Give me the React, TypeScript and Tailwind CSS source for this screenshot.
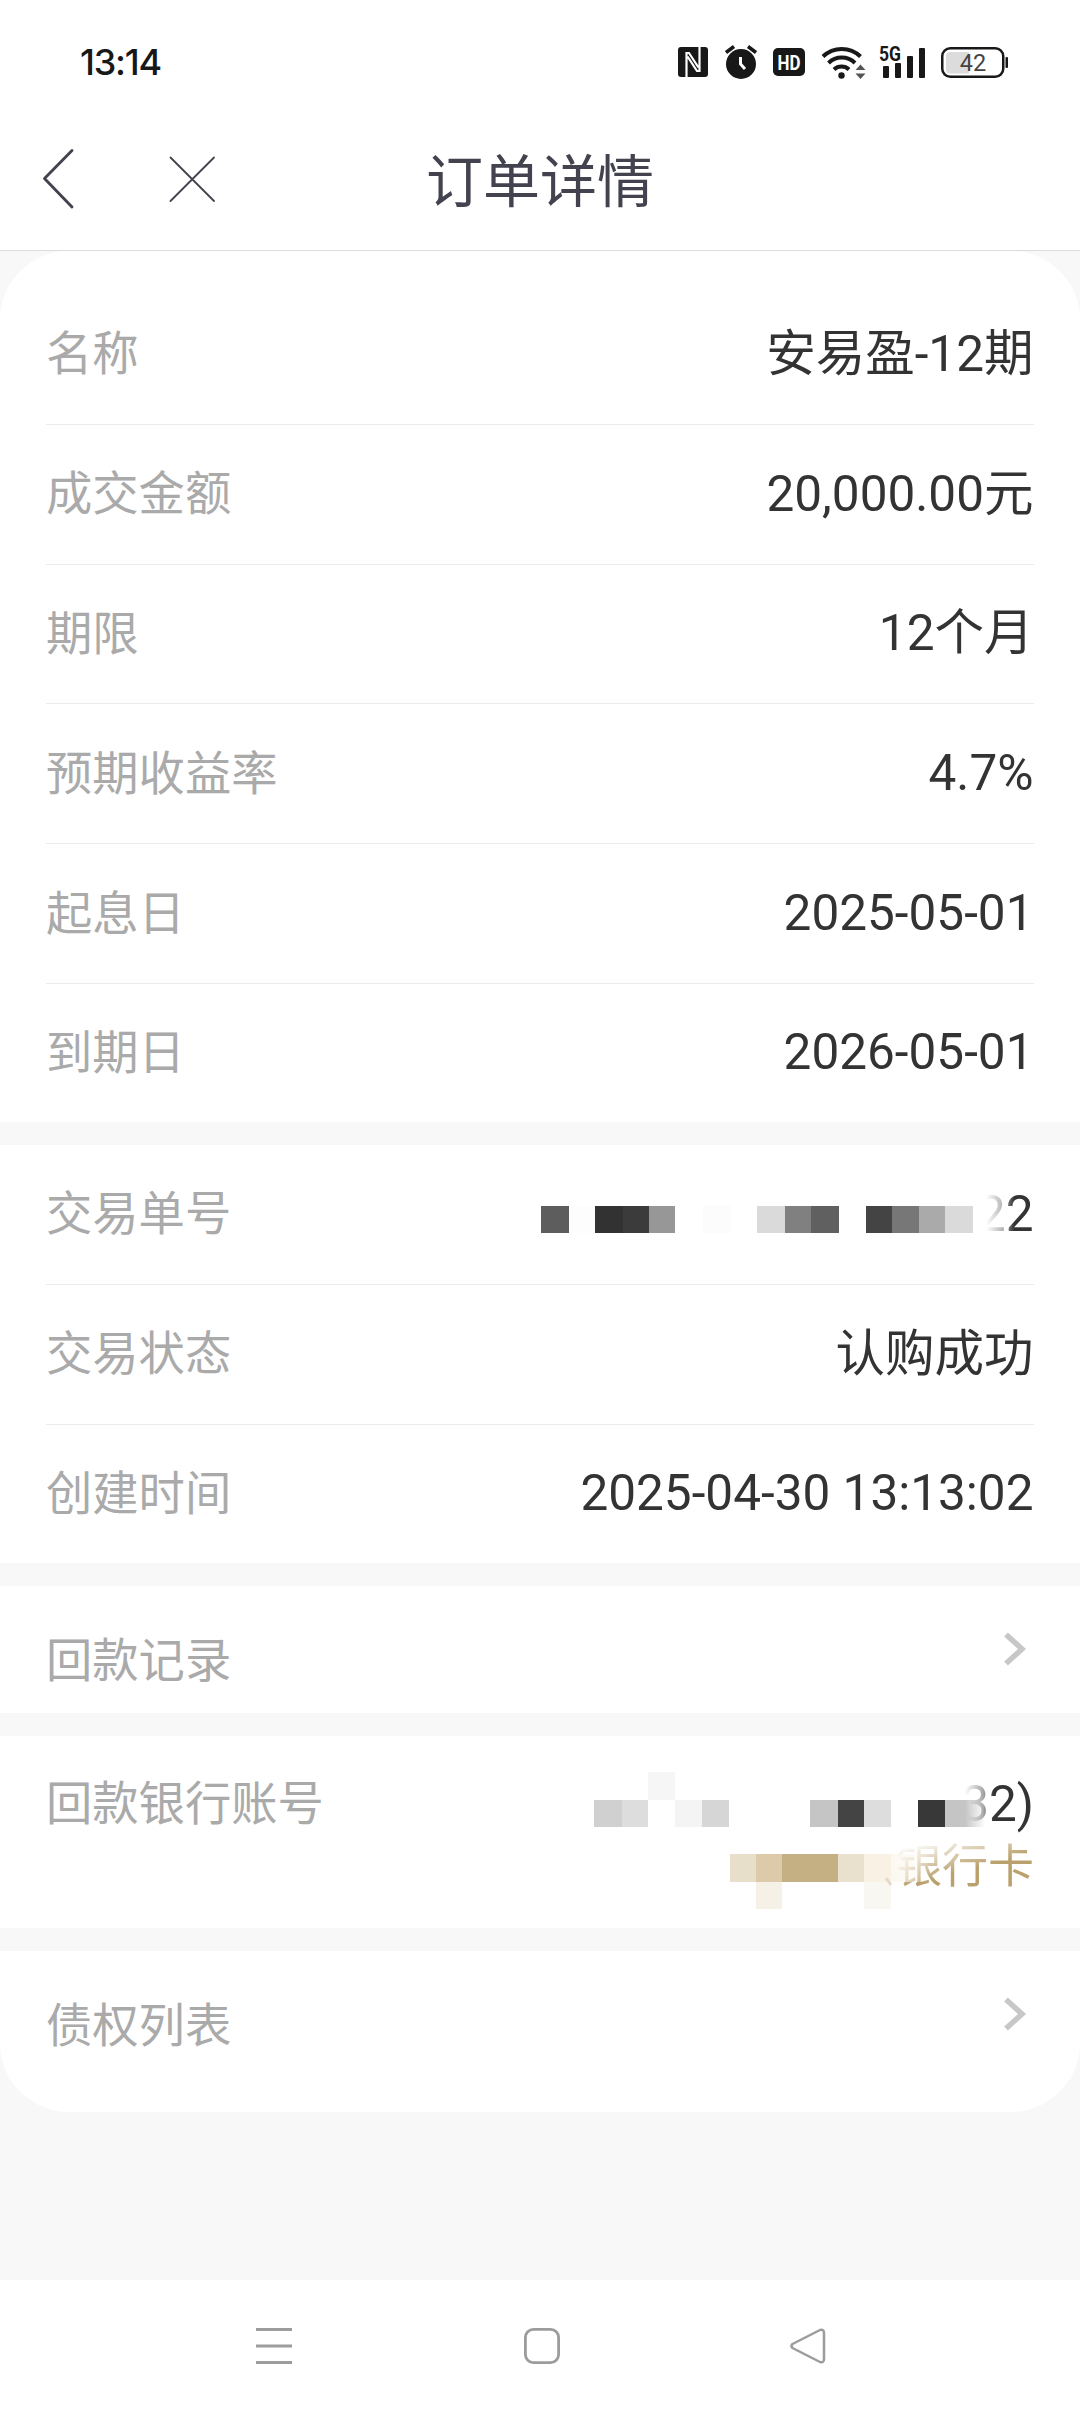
import type { ReactNode } from 'react';

// [x, y, width, height, fill]
type Block = [number, number, number, number, string];

const PRODUCT_ROWS = [
  { label: '名称', value: '安易盈-12期' },
  { label: '成交金额', value: '20,000.00元' },
  { label: '期限', value: '12个月' },
  { label: '预期收益率', value: '4.7%' },
  { label: '起息日', value: '2025-05-01' },
  { label: '到期日', value: '2026-05-01' },
];

// Order number mosaic
const ORDER_BLOCKS: Block[] = [
  [0, 0, 28, 27, '#5d5d5d'],
  [28, 0, 26, 27, '#fdfdfd'],
  [54, 0, 28, 27, '#323232'],
  [82, 0, 26, 27, '#3b3b3b'],
  [108, 0, 26, 27, '#979797'],
  [162, 0, 28, 27, '#fcfcfc'],
  [216, 0, 28, 27, '#dadada'],
  [244, 0, 26, 27, '#808080'],
  [270, 0, 28, 27, '#606060'],
  [325, 0, 26, 27, '#444444'],
  [351, 0, 27, 27, '#777777'],
  [378, 0, 26, 27, '#aaaaaa'],
  [404, 0, 28, 27, '#dadada'],
];

// Bank account mosaic, grey for the number and gold for the card name
const BANK_BLOCKS: Block[] = [
  [0, 28, 28, 27, '#d0d0d0'],
  [28, 28, 26, 27, '#dddddd'],
  [54, 0, 27, 28, '#f6f6f6'],
  [81, 28, 27, 27, '#f4f4f4'],
  [108, 28, 27, 27, '#d6d6d6'],
  [216, 28, 28, 27, '#c5c5c5'],
  [244, 28, 26, 27, '#444444'],
  [270, 28, 27, 27, '#dddddd'],
  [324, 28, 27, 27, '#383838'],
  [136, 82, 26, 28, '#e8dfcb'],
  [162, 82, 26, 28, '#dccaaa'],
  [188, 82, 56, 28, '#c5b083'],
  [244, 82, 26, 28, '#e9e1cd'],
  [270, 82, 27, 28, '#f9f1e4'],
  [162, 110, 26, 27, '#f6f1e6'],
];

function Mosaic({ blocks }: { blocks: Block[] }) {
  return (
    <>
      {blocks.map(([x, y, w, h, fill]) => (
        <rect key={`${x}-${y}`} x={x} y={y} width={w} height={h} fill={fill} />
      ))}
    </>
  );
}

function StatusBar() {
  return (
    <div className="flex h-[124px] items-center justify-between pr-[71px] pl-[80px] text-[#181818]">
      <span className="font-[Inter,sans-serif] text-[36px] leading-none font-[450] tracking-[-1.2px]">13:14</span>
      <div className="flex items-center">
        <svg width="30" height="30" viewBox="0 0 30 30">
          <rect width="30" height="30" rx="3" fill="currentColor" />
          <path d="M8.500 30V6h2.500l9.500 14.500M21.500 0V24H19L9.500 9.500" fill="none" stroke="#fff" strokeWidth="2.200" />
        </svg>
        <svg className="ml-[17px]" width="32" height="36" viewBox="0 0 32 36">
          <circle cx="16" cy="20" r="15" fill="currentColor" />
          <path d="M1 8.500l8-6M31 8.500l-8-6" stroke="currentColor" strokeWidth="3.500" />
          <path d="M15.500 13v7l4.500 5" fill="none" stroke="#fff" strokeWidth="3" />
        </svg>
        <svg className="ml-[16px]" width="32" height="28" viewBox="0 0 32 28">
          <rect width="32" height="28" rx="5" fill="currentColor" />
          <text x="16" y="21.500" textAnchor="middle" textLength="23" lengthAdjust="spacingAndGlyphs" fill="#fff" fontFamily="Roboto, sans-serif" fontWeight="700" fontSize="21">HD</text>
        </svg>
        <svg className="ml-[16px]" width="45" height="34" viewBox="0 0 45 34">
          <g fill="none" stroke="currentColor" strokeWidth="4">
            <path d="M2 11.500a27 27 0 0 1 37.500 0" />
            <path d="M7.500 18a19 19 0 0 1 26.500 0" />
            <path d="M13 24.500a11 11 0 0 1 15 0" />
          </g>
          <circle cx="20.500" cy="30.500" r="3.200" fill="currentColor" />
          <path d="M34.500 25l5-5.500 5 5.500zM34.500 28.500l5 5.500 5-5.500z" fill="#555" />
        </svg>
        <svg className="ml-[13px]" width="47" height="46" viewBox="0 -6 47 46">
          <text x="0" y="15.500" textLength="22" lengthAdjust="spacingAndGlyphs" fill="currentColor" fontFamily="Roboto, sans-serif" fontWeight="700" fontSize="20">5G</text>
          <g fill="currentColor">
            <rect x="4" y="21" width="6" height="12" rx="1" />
            <rect x="16" y="18" width="6" height="15" rx="1" />
            <rect x="28" y="11" width="6" height="22" rx="1" />
            <rect x="40" y="3" width="6" height="30" rx="1" />
          </g>
        </svg>
        <svg className="ml-[15px]" width="68" height="31" viewBox="0 0 68 31">
          <rect x="1.250" y="1.250" width="61" height="28.500" rx="8" fill="none" stroke="currentColor" strokeWidth="2.500" />
          <path d="M9 5h19v21.500H9a4 4 0 0 1-4-4V9a4 4 0 0 1 4-4z" fill="#dcdcdc" />
          <rect x="64.500" y="10" width="2.500" height="11" rx="1" fill="currentColor" />
          <text x="32" y="24" textAnchor="middle" fill="#444" fontFamily="Roboto, sans-serif" fontSize="23.500">42</text>
        </svg>
      </div>
    </div>
  );
}

function TitleBar() {
  return (
    <header className="grid h-[127px] grid-cols-[1fr_auto_1fr] items-start border-b border-[#dddddd] text-[#43434f]">
      <svg className="mt-[20px] ml-[42px]" width="176" height="70" viewBox="0 0 176 70" fill="none" stroke="currentColor" strokeLinecap="round" strokeLinejoin="round">
        <path d="M30 6.500L2.500 34.500L30 63" strokeWidth="2.900" />
        <path d="M128.500 13.500l43.500 43.500M172 13.500l-43.500 43.500" strokeWidth="1.800" />
      </svg>
      <h1 className="mt-[19px] text-[57px] leading-[80px]">订单详情</h1>
    </header>
  );
}

function Section({ children }: { children: ReactNode }) {
  return <section className="bg-white px-[46px]">{children}</section>;
}

function Label({ children }: { children: ReactNode }) {
  return <span className="text-[46.300px] leading-[60px] text-[#aaaaaa]">{children}</span>;
}

function Row({ label, children }: { label: string; children: ReactNode }) {
  return (
    <div className="flex h-[139.8px] items-center justify-between border-b border-[#ebebeb] last:h-[138px] last:border-0">
      <Label>{label}</Label>
      <div className="flex items-center pr-[0.5px] pb-[1px] text-[49.500px] leading-[60px] text-[#333333]">{children}</div>
    </div>
  );
}

function LinkRow({ label }: { label: string }) {
  return (
    <div className="flex h-[127px] items-center justify-between">
      <div className="pt-[23px]"><Label>{label}</Label></div>
      <svg className="mr-[8px]" width="22" height="34" viewBox="0 0 22 34">
        <path d="M2 2.500L18 17L2 31.500" fill="none" stroke="#c7c7c7" strokeWidth="5.500" />
      </svg>
    </div>
  );
}

export default function App() {
  return (
    <div className="flex h-[2412px] w-[1080px] flex-col bg-white font-[Roboto,'Noto_Sans_CJK_SC',sans-serif]">
      <StatusBar />
      <TitleBar />

      <main className="flex-1 bg-[#f8f8f8]">
        <div className="flex flex-col gap-[23px] overflow-hidden rounded-[69px]">
          <Section>
            <div className="pt-[34px]">
              {PRODUCT_ROWS.map((r) => (
                <Row key={r.label} label={r.label}>{r.value}</Row>
              ))}
            </div>
          </Section>

          <Section>
            <Row label="交易单号">
              <svg className="mt-[11px] mr-[5px]" width="432" height="27" viewBox="0 0 432 27">
                <Mosaic blocks={ORDER_BLOCKS} />
              </svg>
              <span className="bg-linear-to-r from-white from-15% via-[#bbbbbb] via-42% to-[#333333] to-65% bg-clip-text text-transparent">22</span>
            </Row>
            <Row label="交易状态">认购成功</Row>
            <Row label="创建时间">2025-04-30 13:13:02</Row>
          </Section>

          <Section>
            <LinkRow label="回款记录" />
          </Section>

          <Section>
            <div className="relative flex h-[192px] items-start justify-between pt-[38px]">
              <Label>回款银行账号</Label>
              <div className="flex flex-col items-end">
                <span className="bg-linear-to-r from-white from-5% via-[#aaaaaa] via-30% to-[#333333] to-45% bg-clip-text text-[49.500px] leading-[60px] text-transparent">32)</span>
                <span className="bg-linear-165 from-white from-15% to-[#b9a06c] to-55% bg-clip-text text-[46px] leading-[64px] text-transparent">银行卡</span>
              </div>
              <svg className="absolute top-[36px] left-[548px]" width="420" height="137" viewBox="0 0 420 137">
                <defs>
                  <linearGradient id="greyFade">
                    <stop offset="0.5" stopColor="#c5c5c5" />
                    <stop offset="1" stopColor="#c5c5c5" stopOpacity="0" />
                  </linearGradient>
                  <linearGradient id="goldFade">
                    <stop offset="0" stopColor="#fcf8f0" />
                    <stop offset="1" stopColor="#fcf8f0" stopOpacity="0" />
                  </linearGradient>
                </defs>
                <Mosaic blocks={BANK_BLOCKS} />
                <rect x="351" y="28" width="40" height="27" fill="url(#greyFade)" />
                <rect x="297" y="82" width="40" height="28" fill="url(#goldFade)" />
                <rect x="270" y="110" width="27" height="27" fill="#f9f7f2" />
                <path d="M292 106l5 7" stroke="#e3d9c4" strokeWidth="3" />
              </svg>
            </div>
          </Section>

          <Section>
            <div className="pb-[34px]">
              <LinkRow label="债权列表" />
            </div>
          </Section>
        </div>
      </main>

      <nav className="flex h-[132px] items-start justify-between bg-white pt-[48px] pr-[254px] pl-[256px] text-[#9c9c9c]">
        <svg width="36" height="36" viewBox="0 0 36 36" stroke="currentColor" strokeWidth="3">
          <path d="M0 1.500h36M0 18h36M0 34.500h36" />
        </svg>
        <svg className="ml-[2px]" width="36" height="36" viewBox="0 0 36 36" fill="none" stroke="currentColor" strokeWidth="2.800">
          <rect x="1.400" y="1.400" width="33.200" height="33.200" rx="8" />
        </svg>
        <svg width="36" height="36" viewBox="0 0 36 36" fill="none" stroke="currentColor" strokeWidth="2.500" strokeLinejoin="round">
          <path d="M30 2L2.500 16q-2 2 0 4L30 34q4 1 4-3V5q0-4-4-3z" />
        </svg>
      </nav>
    </div>
  );
}
